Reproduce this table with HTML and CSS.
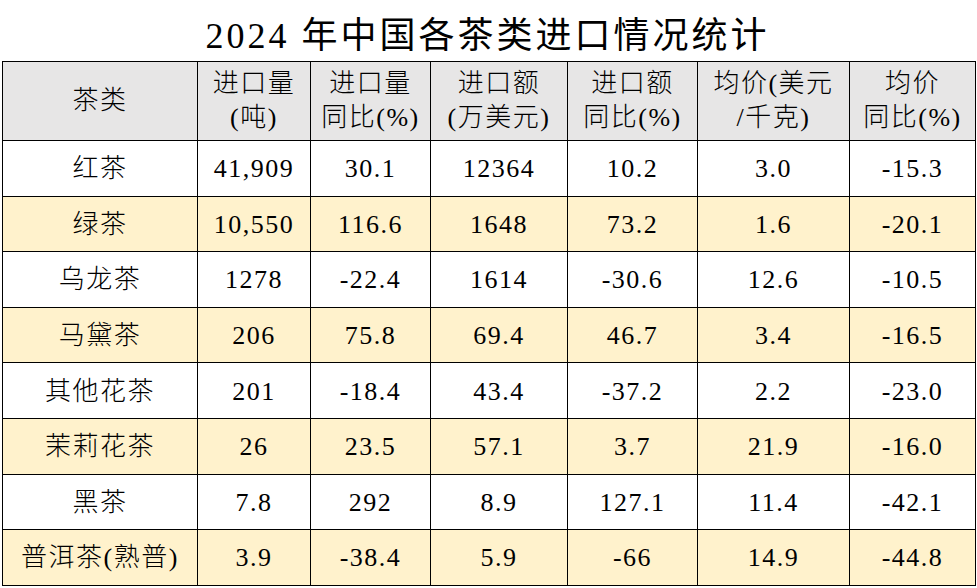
FILE: index.html
```html
<!DOCTYPE html>
<html lang="zh-CN">
<head>
<meta charset="utf-8">
<title>2024 年中国各茶类进口情况统计</title>
<link rel="stylesheet" href="styles.css">
</head>
<body>
<div class="page">
  <h1 class="title">2024 年中国各茶类进口情况统计</h1>
  <table class="stats">
    <colgroup>
      <col class="c1"><col class="c2"><col class="c3"><col class="c4"><col class="c5"><col class="c6"><col class="c7">
    </colgroup>
    <thead>
      <tr>
        <th>茶类</th>
        <th>进口量<br>(吨)</th>
        <th>进口量<br>同比(%)</th>
        <th>进口额<br>(万美元)</th>
        <th>进口额<br>同比(%)</th>
        <th>均价(美元<br>/千克)</th>
        <th>均价<br>同比(%)</th>
      </tr>
    </thead>
    <tbody>
      <tr><td>红茶</td><td>41,909</td><td>30.1</td><td>12364</td><td>10.2</td><td>3.0</td><td>-15.3</td></tr>
      <tr class="alt"><td>绿茶</td><td>10,550</td><td>116.6</td><td>1648</td><td>73.2</td><td>1.6</td><td>-20.1</td></tr>
      <tr><td>乌龙茶</td><td>1278</td><td>-22.4</td><td>1614</td><td>-30.6</td><td>12.6</td><td>-10.5</td></tr>
      <tr class="alt"><td>马黛茶</td><td>206</td><td>75.8</td><td>69.4</td><td>46.7</td><td>3.4</td><td>-16.5</td></tr>
      <tr><td>其他花茶</td><td>201</td><td>-18.4</td><td>43.4</td><td>-37.2</td><td>2.2</td><td>-23.0</td></tr>
      <tr class="alt"><td>茉莉花茶</td><td>26</td><td>23.5</td><td>57.1</td><td>3.7</td><td>21.9</td><td>-16.0</td></tr>
      <tr><td>黑茶</td><td>7.8</td><td>292</td><td>8.9</td><td>127.1</td><td>11.4</td><td>-42.1</td></tr>
      <tr class="alt"><td>普洱茶(熟普)</td><td>3.9</td><td>-38.4</td><td>5.9</td><td>-66</td><td>14.9</td><td>-44.8</td></tr>
    </tbody>
  </table>
</div>
</body>
</html>
```

FILE: styles.css
```css
html, body {
  margin: 0;
  padding: 0;
  background: #ffffff;
}

.page {
  width: 977px;
  height: 588px;
  padding-left: 2px;
  box-sizing: border-box;
  font-family: "Liberation Serif", "Noto Sans CJK SC", serif;
  color: #000;
}

.title {
  margin: 0;
  height: 61px;
  display: flex;
  align-items: center;
  justify-content: center;
  font-size: 36px;
  font-weight: 400;
  letter-spacing: 3px;
  padding-right: 4px;
  padding-top: 2px;
  box-sizing: border-box;
}

.stats {
  border-collapse: collapse;
  table-layout: fixed;
  width: 973px;
  font-size: 26px;
}

.c1 { width: 195px; }
.c2 { width: 113px; }
.c3 { width: 120px; }
.c4 { width: 137px; }
.c5 { width: 130px; }
.c6 { width: 152px; }
.c7 { width: 126px; }

.stats th,
.stats td {
  border: 1.5px solid #000;
  text-align: center;
  vertical-align: middle;
  padding: 0;
  font-weight: 300;
  letter-spacing: 1.5px;
}

.stats th {
  background: #e7e6e6;
  height: 78px;
  line-height: 34px;
}

.stats td {
  height: 52.6px;
  line-height: 30px;
  padding-top: 2px;
}

.stats tr.alt td {
  background: #fff2cc;
}
```
